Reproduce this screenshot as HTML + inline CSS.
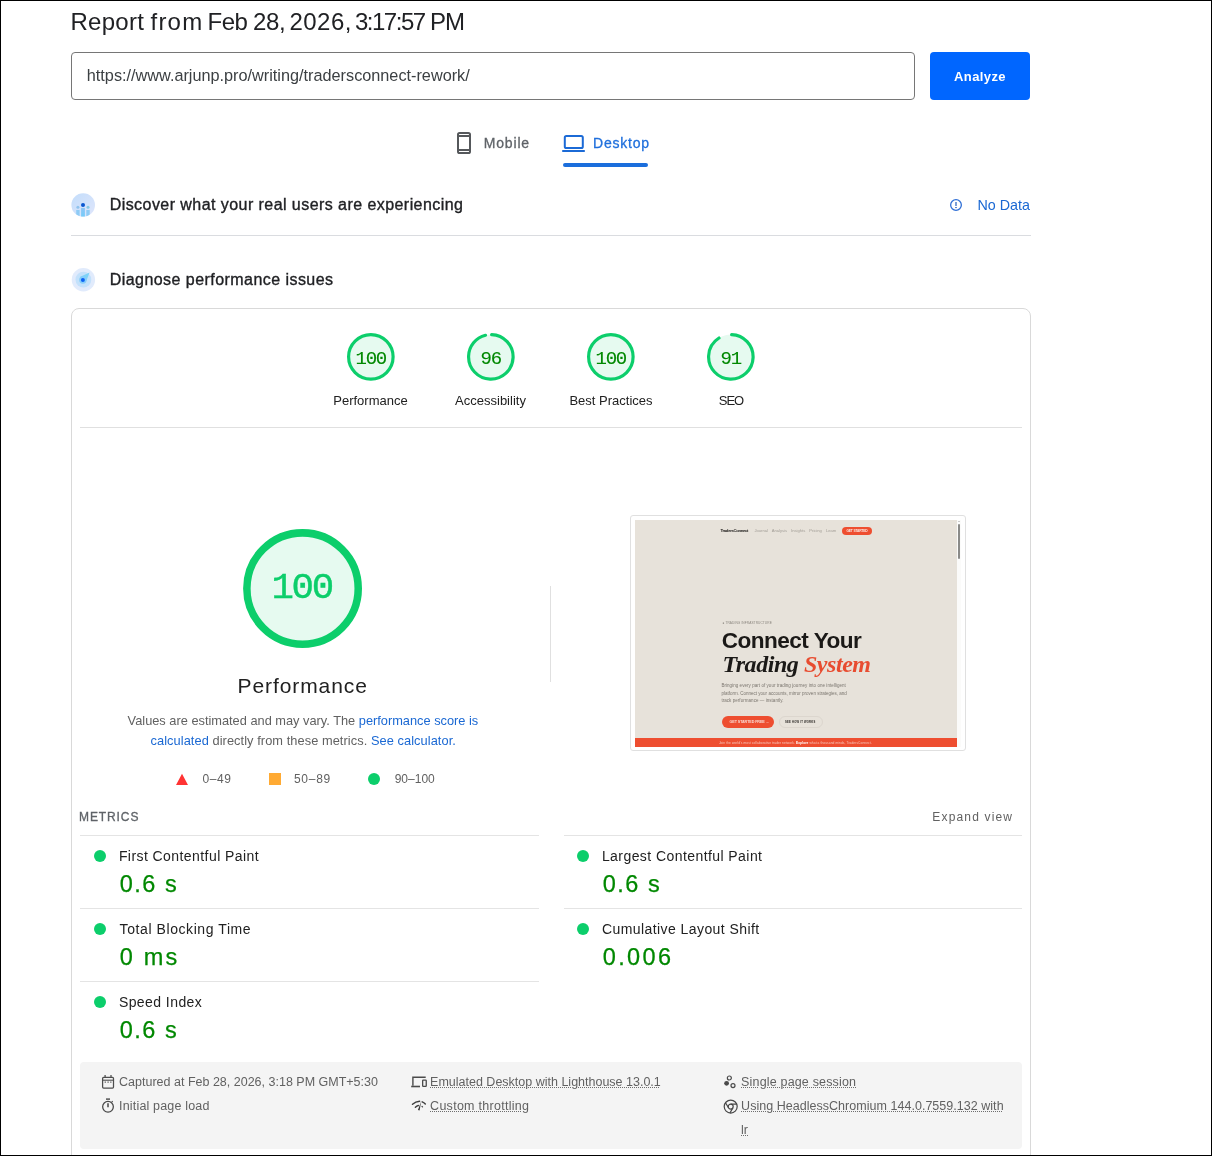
<!DOCTYPE html>
<html lang="en">
<head>
<meta charset="utf-8">
<title>PageSpeed Insights</title>
<style>
*{box-sizing:border-box;margin:0;padding:0}
html,body{width:1212px;height:1156px;overflow:hidden;background:#fff}
body{position:relative;font-family:"Liberation Sans",sans-serif;color:#202124}
.abs{position:absolute;white-space:nowrap}
#frame{position:absolute;left:0;top:0;width:1212px;height:1156px;border:1px solid #000;z-index:50;pointer-events:none}
.t{position:absolute;white-space:nowrap;line-height:1;transform-origin:0 0}
.hl{position:absolute;height:1px;background:#dadce0}
/* title */
.tw{top:10px;font-size:24px;color:#202124}
/* input */
#url{position:absolute;left:71px;top:52px;width:844px;height:48px;border:1px solid #767676;border-radius:4px;background:#fff}
#urltxt{left:86.8px;top:66.7px;font-size:16.25px;color:#3c4043}
#btn{position:absolute;left:930px;top:52px;width:100px;height:48px;border-radius:4px;background:#0066ff}
#btntxt{left:954px;top:69.7px;font-size:13px;letter-spacing:0.4px;font-weight:bold;color:#fff}
/* tabs */
#tabm{left:483.7px;top:136.3px;font-size:14px;letter-spacing:0.84px;color:#5f6368;-webkit-text-stroke:0.3px #5f6368}
#tabd{left:593px;top:136.3px;font-size:14px;letter-spacing:0.77px;color:#1f6fdc;-webkit-text-stroke:0.3px #1f6fdc}
#tabline{position:absolute;left:563px;top:163.3px;width:85px;height:3.7px;border-radius:2px;background:#1b6edc}
/* sections */
.h2{font-size:16px;color:#202124;-webkit-text-stroke:0.35px #202124}
#h2a{left:109.7px;top:197.3px;letter-spacing:0.44px}
#h2b{left:109.7px;top:272.2px;letter-spacing:0.45px}
#nodata{left:977.4px;top:197.7px;font-size:14.3px;color:#1a68d3}
/* card */
#card{position:absolute;left:71px;top:308px;width:960px;height:900px;border:1px solid #d9d9d9;border-radius:8px;background:#fff}
.glabel{font-size:13px;color:#212121;text-align:center;width:120px}
.gnum{font-family:"Liberation Mono",monospace;color:#080;text-align:center;-webkit-text-stroke:0.12px currentColor}
/* metrics */
.mtitle{font-size:14px;letter-spacing:0.43px;color:#212121}
.mval{font-size:23.5px;letter-spacing:1.5px;color:#080;-webkit-text-stroke:0.25px #080}
.dot{position:absolute;width:12px;height:12px;border-radius:50%;background:#0cce6b}
.meta{font-size:12.5px;color:#616161}
.ul{text-decoration:underline dotted #6e6e6e;text-decoration-thickness:1px;text-underline-offset:1.2px;text-decoration-skip-ink:auto}
.desc{font-size:12.8px;color:#616161}
.lk{color:#1a68d3}
.leg{font-size:12px;color:#616161}
.ml{background:#e4e4e4}
</style>
</head>
<body>
<div id="root" style="position:absolute;left:0;top:0;width:1212px;height:1156px;will-change:transform">
<div id="frame"></div>

<!-- title -->
<div class="t tw" id="tw1" style="left:70.4px;letter-spacing:0.28px">Report</div>
<div class="t tw" id="tw2" style="left:150.5px;letter-spacing:1.23px">from</div>
<div class="t tw" id="tw3" style="left:207.6px;letter-spacing:-0.55px">Feb</div>
<div class="t tw" id="tw4" style="left:253.1px;letter-spacing:-0.45px">28,</div>
<div class="t tw" id="tw5" style="left:289.4px;letter-spacing:0.50px">2026,</div>
<div class="t tw" id="tw6" style="left:355.0px;letter-spacing:-1.50px">3:17:57</div>
<div class="t tw" id="tw7" style="left:430.1px;letter-spacing:-1.10px">PM</div>

<!-- url row -->
<div id="url"></div>
<div class="t" id="urltxt">https://www.arjunp.pro/writing/tradersconnect-rework/</div>
<div id="btn"></div>
<div class="t" id="btntxt">Analyze</div>

<!-- tabs -->
<svg class="abs" id="icomobile" style="left:455px;top:130px" width="18" height="26" viewBox="0 0 18 26"><g fill="none" stroke="#55585b" stroke-width="2"><rect x="3" y="3" width="12" height="20" rx="1.6"/><path d="M3 6h12M3 20h12"/></g></svg>
<div class="t" id="tabm">Mobile</div>
<svg class="abs" id="icodesk" style="left:560px;top:132px" width="28" height="22" viewBox="0 0 28 22"><g fill="none" stroke="#1b6ad6" stroke-width="2"><rect x="4.8" y="4" width="18" height="12" rx="1.6"/><path d="M2.2 19h22.6"/></g></svg>
<div class="t" id="tabd">Desktop</div>
<div id="tabline"></div>

<!-- section icons -->
<svg class="abs" id="icofield" style="left:70px;top:192px" width="26" height="26" viewBox="0 0 26 26"><defs><linearGradient id="gf" x1="0" y1="0" x2="1" y2="1"><stop offset="0" stop-color="#c3ddfb"/><stop offset="1" stop-color="#dfe6fb"/></linearGradient><linearGradient id="gb" x1="0" y1="0" x2="0" y2="1"><stop offset="0" stop-color="#8cc4f6"/><stop offset="1" stop-color="#74cdf9"/></linearGradient><clipPath id="cf"><circle cx="13.2" cy="13" r="11.6"/></clipPath></defs><circle cx="13.2" cy="13" r="11.8" fill="url(#gf)"/><g clip-path="url(#cf)"><rect x="6.2" y="18" width="3.4" height="7" fill="#8ecbf5"/><rect x="16.3" y="18" width="3.4" height="7" fill="#8ecbf5"/><rect x="11.1" y="16" width="3.8" height="9" fill="url(#gb)"/></g><circle cx="7.9" cy="15.3" r="1.5" fill="#8fc3ee"/><circle cx="18" cy="15.3" r="1.5" fill="#86c9e6"/><circle cx="13" cy="12.9" r="2" fill="#0b57d0"/></svg>
<svg class="abs" id="icolab" style="left:70px;top:267px" width="26" height="26" viewBox="0 0 26 26"><circle cx="13.4" cy="12.7" r="11.7" fill="#e1ebfc"/><circle cx="13.4" cy="12.7" r="7.9" fill="#c3e1fb"/><path d="M9.8 10 L19.6 5.6 L16.3 14 Z" fill="#7dd3f8"/><circle cx="12.9" cy="13" r="3.7" fill="#86cefa"/><circle cx="12.9" cy="13" r="2" fill="#0b62f5"/></svg>
<svg class="abs" id="icoinfo" style="left:948px;top:197px" width="16" height="16" viewBox="0 0 16 16"><circle cx="8" cy="8" r="5.35" fill="none" stroke="#2f6fd6" stroke-width="1.3"/><path d="M8 5v4.1" stroke="#3f74c8" stroke-width="1.4" fill="none"/><rect x="7.25" y="10" width="1.5" height="1.1" fill="#2a5cc0"/></svg>
<!-- section: field data -->
<div class="t h2" id="h2a">Discover what your real users are experiencing</div>
<div class="t" id="nodata">No Data</div>
<div class="hl" style="left:71px;top:235px;width:960px"></div>

<!-- section: lab data -->
<div class="t h2" id="h2b">Diagnose performance issues</div>

<!-- card -->
<div id="card"></div>

<!-- small gauges -->
<svg class="abs" style="left:347.1px;top:333.1px" width="47.7" height="47.7" viewBox="0 0 120 120"><circle cx="60" cy="60" r="56" fill="#0cce6b" fill-opacity=".1"/><circle cx="60" cy="60" r="56" fill="none" stroke="#0cce6b" stroke-width="8"/></svg>
<svg class="abs" style="left:467.1px;top:333.1px" width="47.7" height="47.7" viewBox="0 0 120 120"><circle cx="60" cy="60" r="56" fill="#0cce6b" fill-opacity=".1"/><circle cx="60" cy="60" r="56" fill="none" stroke="#0cce6b" stroke-width="8" stroke-linecap="round" stroke-dasharray="333.8 351.86" transform="rotate(-87.95 60 60)"/></svg>
<svg class="abs" style="left:587.1px;top:333.1px" width="47.7" height="47.7" viewBox="0 0 120 120"><circle cx="60" cy="60" r="56" fill="#0cce6b" fill-opacity=".1"/><circle cx="60" cy="60" r="56" fill="none" stroke="#0cce6b" stroke-width="8"/></svg>
<svg class="abs" style="left:707.1px;top:333.1px" width="47.7" height="47.7" viewBox="0 0 120 120"><circle cx="60" cy="60" r="56" fill="#0cce6b" fill-opacity=".1"/><circle cx="60" cy="60" r="56" fill="none" stroke="#0cce6b" stroke-width="8" stroke-linecap="round" stroke-dasharray="316.2 351.86" transform="rotate(-87.95 60 60)"/></svg>
<div class="t gnum" id="g1" style="left:355.6px;top:349.8px;font-size:19px;letter-spacing:-1.35px">100</div>
<div class="t gnum" id="g2" style="left:480.6px;top:349.8px;font-size:19px;letter-spacing:-1.35px">96</div>
<div class="t gnum" id="g3" style="left:595.6px;top:349.8px;font-size:19px;letter-spacing:-1.35px">100</div>
<div class="t gnum" id="g4" style="left:720.6px;top:349.8px;font-size:19px;letter-spacing:-1.35px">91</div>
<div class="t glabel" id="gl1" style="left:310.5px;top:394px">Performance</div>
<div class="t glabel" id="gl2" style="left:430.5px;top:394px">Accessibility</div>
<div class="t glabel" id="gl3" style="left:551px;top:394px">Best Practices</div>
<div class="t glabel" id="gl4" style="left:671px;top:394px;letter-spacing:-1px">SEO</div>
<div class="hl" style="left:80px;top:427px;width:942px;background:#e0e0e0"></div>

<!-- big gauge -->
<svg class="abs" style="left:243px;top:528.9px" width="119.1" height="119.1" viewBox="0 0 120 120"><circle cx="60" cy="60" r="56" fill="#0cce6b" fill-opacity=".1"/><circle cx="60" cy="60" r="56.1" fill="none" stroke="#0cce6b" stroke-width="7.6"/></svg>
<div class="t gnum" id="gbig" style="left:271.5px;top:569.8px;font-size:37.4px;letter-spacing:-2.35px;color:#0cce6b;-webkit-text-stroke:0.4px #0cce6b">100</div>
<div class="t" id="perf" style="left:237.6px;top:675.4px;font-size:21px;letter-spacing:0.9px;color:#212121">Performance</div>
<div class="t desc" id="d1" style="left:127.6px;top:714.7px">Values are estimated and may vary. The <span class="lk">performance score is</span></div>
<div class="t desc" id="d2" style="left:150.5px;top:735.2px;letter-spacing:0.07px"><span class="lk">calculated</span> directly from these metrics. <span class="lk">See calculator.</span></div>
<!-- legend -->
<svg class="abs" style="left:175px;top:773px" width="14" height="13" viewBox="0 0 14 13"><path d="M7 0.8 L13 12 L1 12 Z" fill="#f33"/></svg>
<div class="t leg" id="l1" style="left:202.4px;top:773px;letter-spacing:0.6px">0&#8211;49</div>
<div class="abs" style="left:269px;top:773px;width:12px;height:12px;background:#fa3"></div>
<div class="t leg" id="l2" style="left:293.9px;top:773px;letter-spacing:0.75px">50&#8211;89</div>
<div class="dot" style="left:367.5px;top:773px"></div>
<div class="t leg" id="l3" style="left:394.7px;top:773px">90&#8211;100</div>
<div class="abs" style="left:550px;top:585.7px;width:1px;height:96.3px;background:#e0e0e0"></div>

<!-- thumbnail -->
<div class="abs" id="thumb" style="left:630px;top:515px;width:336px;height:236px;border:1px solid #e0e0e0;border-radius:3px;background:#fff"></div>
<div class="abs" id="shot" style="left:635px;top:520px;width:326px;height:227px;background:#fff;overflow:hidden">
  <div class="abs" style="left:0;top:0;width:322.3px;height:227px;background:#e7e2da"></div>
  <div class="abs" style="left:0;top:218px;width:322.3px;height:9px;background:#ee4e30"></div>
  <div class="abs" style="left:322.3px;top:0;width:3.7px;height:227px;background:#fbfbfa"></div>
  <div class="abs" style="left:323px;top:4.2px;width:2.4px;height:34.7px;background:#8a8a88;border-radius:1px"></div><div class="abs" style="left:323.2px;top:1.4px;width:0;height:0;border-left:1px solid transparent;border-right:1px solid transparent;border-bottom:1.4px solid #9a9a9a"></div>
  <!-- nav -->
  <div class="t" id="tn1" style="left:85.5px;top:9.3px;font-size:4.3px;font-weight:bold;color:#1d1b19;letter-spacing:-0.36px">TradersConnect</div>
  <div class="t" id="tn2" style="left:119.5px;top:9.1px;font-size:4.1px;color:#a29d96;word-spacing:2.95px">Journal Analysis Insights Pricing Learn</div>
  <div class="abs" style="left:206.5px;top:6.6px;width:30.5px;height:8.2px;border-radius:5px;background:#ee4e30"></div>
  <div class="t" id="tn3" style="left:211.5px;top:10px;font-size:3.3px;font-weight:bold;color:#fbe9e4;letter-spacing:-0.2px">GET STARTED</div>
  <!-- hero -->
  <div class="t" id="tey" style="left:87.5px;top:101.8px;font-size:3.2px;color:#8b867f;letter-spacing:0.09px">&#9679; TRADING INFRASTRUCTURE</div>
  <div class="t" id="hero1" style="left:86.8px;top:110.4px;font-size:22.6px;font-weight:bold;color:#1b1917;letter-spacing:-0.55px">Connect Your</div>
  <div class="t" id="hero2" style="left:87.4px;top:131.8px;font-family:'Liberation Serif',serif;font-style:italic;font-weight:bold;font-size:24px;color:#1b1917;letter-spacing:-0.45px">Trading <span style="color:#e84c30">System</span></div>
  <div class="t" id="tp1" style="left:86.4px;top:164.4px;font-size:4.5px;letter-spacing:0.05px;color:#7b766f">Bringing every part of your trading journey into one intelligent</div>
  <div class="t" id="tp2" style="left:86.4px;top:171.5px;font-size:4.5px;letter-spacing:0.01px;color:#7b766f">platform. Connect your accounts, mirror proven strategies, and</div>
  <div class="t" id="tp3" style="left:86.4px;top:178.6px;font-size:4.5px;letter-spacing:0.05px;color:#7b766f">track performance &#8212; instantly.</div>
  <div class="abs" style="left:87px;top:195.6px;width:51.5px;height:12px;border-radius:6px;background:#ee4e30"></div>
  <div class="t" id="tb1" style="left:94.6px;top:200.8px;font-size:3.7px;font-weight:bold;color:#f9d9d1;letter-spacing:-0.1px">GET STARTED FREE &#8594;</div>
  <div class="abs" style="left:144px;top:195.6px;width:44px;height:12px;border-radius:6px;border:0.6px solid #dcd6ce"></div>
  <div class="t" id="tb2" style="left:150.2px;top:200.8px;font-size:3.7px;font-weight:bold;color:#2a2724;letter-spacing:0.3px;transform:scaleX(0.73)">SEE HOW IT WORKS</div>
  <div class="t" id="tbar" style="left:83.9px;top:222.1px;font-size:3.25px;color:#f6c9bf;letter-spacing:0.08px">Join the world&#8217;s most collaborative trader network. <span style="color:#fff;font-weight:bold">Explore</span> what a thousand minds, TradersConnect.</div>
</div>

<!-- metrics -->
<div class="t" id="mh" style="left:79px;top:811px;font-size:12px;letter-spacing:0.9px;color:#5f6368;-webkit-text-stroke:0.3px #5f6368">METRICS</div>
<div class="t" id="ev" style="left:932.3px;top:811px;font-size:12px;letter-spacing:1.17px;color:#616161">Expand view</div>
<div class="hl ml" style="left:80px;top:835px;width:459px"></div>
<div class="hl ml" style="left:80px;top:908px;width:459px"></div>
<div class="hl ml" style="left:80px;top:981px;width:459px"></div>
<div class="hl ml" style="left:564px;top:835px;width:458px"></div>
<div class="hl ml" style="left:564px;top:908px;width:458px"></div>
<div class="dot" style="left:94px;top:850px"></div>
<div class="dot" style="left:94px;top:923px"></div>
<div class="dot" style="left:94px;top:996px"></div>
<div class="dot" style="left:577px;top:850px"></div>
<div class="dot" style="left:577px;top:923px"></div>
<div class="t mtitle" id="m1" style="left:118.9px;top:848.85px">First Contentful Paint</div>
<div class="t mval" id="v1" style="left:119.7px;top:873.40px">0.6 s</div>
<div class="t mtitle" id="m2" style="left:119.6px;top:921.85px;letter-spacing:0.58px">Total Blocking Time</div>
<div class="t mval" id="v2" style="left:119.7px;top:946.40px;letter-spacing:2.2px">0 ms</div>
<div class="t mtitle" id="m3" style="left:118.9px;top:994.85px">Speed Index</div>
<div class="t mval" id="v3" style="left:119.7px;top:1019.40px">0.6 s</div>
<div class="t mtitle" id="m4" style="left:601.9px;top:848.85px">Largest Contentful Paint</div>
<div class="t mval" id="v4" style="left:602.7px;top:873.40px">0.6 s</div>
<div class="t mtitle" id="m5" style="left:601.9px;top:921.85px">Cumulative Layout Shift</div>
<div class="t mval" id="v5" style="left:602.7px;top:946.40px;letter-spacing:2.4px">0.006</div>

<!-- meta box -->
<div class="abs" id="metabox" style="left:80px;top:1062px;width:942px;height:87px;background:#f4f4f4;border-radius:4px"></div>
<!-- meta icons -->
<svg class="abs" id="icocal" style="left:100px;top:1072px" width="16" height="18" viewBox="0 0 16 18"><g fill="none" stroke="#4d4d4d" stroke-width="1.25"><rect x="2.6" y="5.4" width="10.9" height="10.7" rx="1"/><path d="M2.6 8.2h10.9" stroke-width="1.1"/><path d="M5.1 3v2.6M11 3v2.6"/></g><path d="M4.6 9.4h1.4v1.4h-1.4zM7.4 9.4h1.4v1.4h-1.4zM10.1 9.4h1.4v1.4h-1.4z" fill="#6a6a6a"/></svg>
<svg class="abs" id="icosw" style="left:100px;top:1096px" width="16" height="18" viewBox="0 0 16 18"><g fill="none" stroke="#474747" stroke-width="1.25"><circle cx="8" cy="10.8" r="5.35"/><path d="M6 3.1h4" stroke-width="1.4"/><path d="M8 7.3v4" stroke-width="1.5"/><path d="M11.7 6.2l1-1" stroke-width="1.1"/></g></svg>
<svg class="abs" id="icodev" style="left:410px;top:1074px" width="18" height="16" viewBox="0 0 18 16"><g fill="none" stroke="#4a4a4a"><path d="M2.9 11.8V3.3H15.7" stroke-width="1.4"/><path d="M1.2 12.5H10" stroke-width="1.6"/><rect x="12.65" y="6.05" width="3.6" height="6.3" rx="0.6" stroke-width="1.3"/></g></svg>
<svg class="abs" id="icothr" style="left:410px;top:1098px" width="18" height="16" viewBox="0 0 18 16"><g fill="none" stroke="#3f3f3f" stroke-linecap="round"><path d="M2.5 6.2Q5.6 3.6 9.6 3.3" stroke-width="1.5"/><path d="M12.2 3.9Q14 4.6 15.3 6" stroke-width="1.5"/><path d="M5.4 9.2Q6.7 8 8.4 7.5" stroke-width="1.5"/><path d="M12 8.4l.5.5" stroke-width="1.3"/></g><path d="M11.2 3.4L9.6 12.6L7.9 12Z" fill="#3a3a3a"/></svg>
<svg class="abs" id="icoses" style="left:722px;top:1074px" width="16" height="16" viewBox="0 0 16 16"><circle cx="7.35" cy="4" r="2" fill="none" stroke="#4a4a4a" stroke-width="1.2"/><circle cx="11" cy="11.6" r="2" fill="none" stroke="#4a4a4a" stroke-width="1.2"/><circle cx="4.6" cy="9.3" r="2.4" fill="#4a4a4a"/></svg>
<svg class="abs" id="icochr" style="left:722px;top:1098px" width="18" height="18" viewBox="0 0 18 18"><g fill="none" stroke="#474747" stroke-width="1.2"><circle cx="8.7" cy="8.6" r="6.5"/><circle cx="8.7" cy="8.6" r="2.5"/><path d="M8.7 6.1H14.7M6.5 9.8L3.5 4.7M10.9 9.9L7.9 15"/></g></svg>
<div class="t meta" id="e1" style="left:119.1px;top:1076px">Captured at Feb 28, 2026, 3:18 PM GMT+5:30</div>
<div class="t meta" id="e2" style="left:119.1px;top:1100px;letter-spacing:0.17px">Initial page load</div>
<div class="t meta" id="e3" style="left:430.1px;top:1076px"><span class="ul">Emulated Desktop with Lighthouse 13.0.1</span></div>
<div class="t meta" id="e4" style="left:430.1px;top:1100px;letter-spacing:0.27px"><span class="ul">Custom throttling</span></div>
<div class="t meta" id="e5" style="left:741.1px;top:1076px;letter-spacing:0.17px"><span class="ul">Single page session</span></div>
<div class="t meta" id="e6" style="left:741.1px;top:1100px;letter-spacing:0.03px"><span class="ul">Using HeadlessChromium 144.0.7559.132 with</span></div>
<div class="t meta" id="e7" style="left:741.1px;top:1124px"><span class="ul">lr</span></div>

</div>
</body>
</html>
